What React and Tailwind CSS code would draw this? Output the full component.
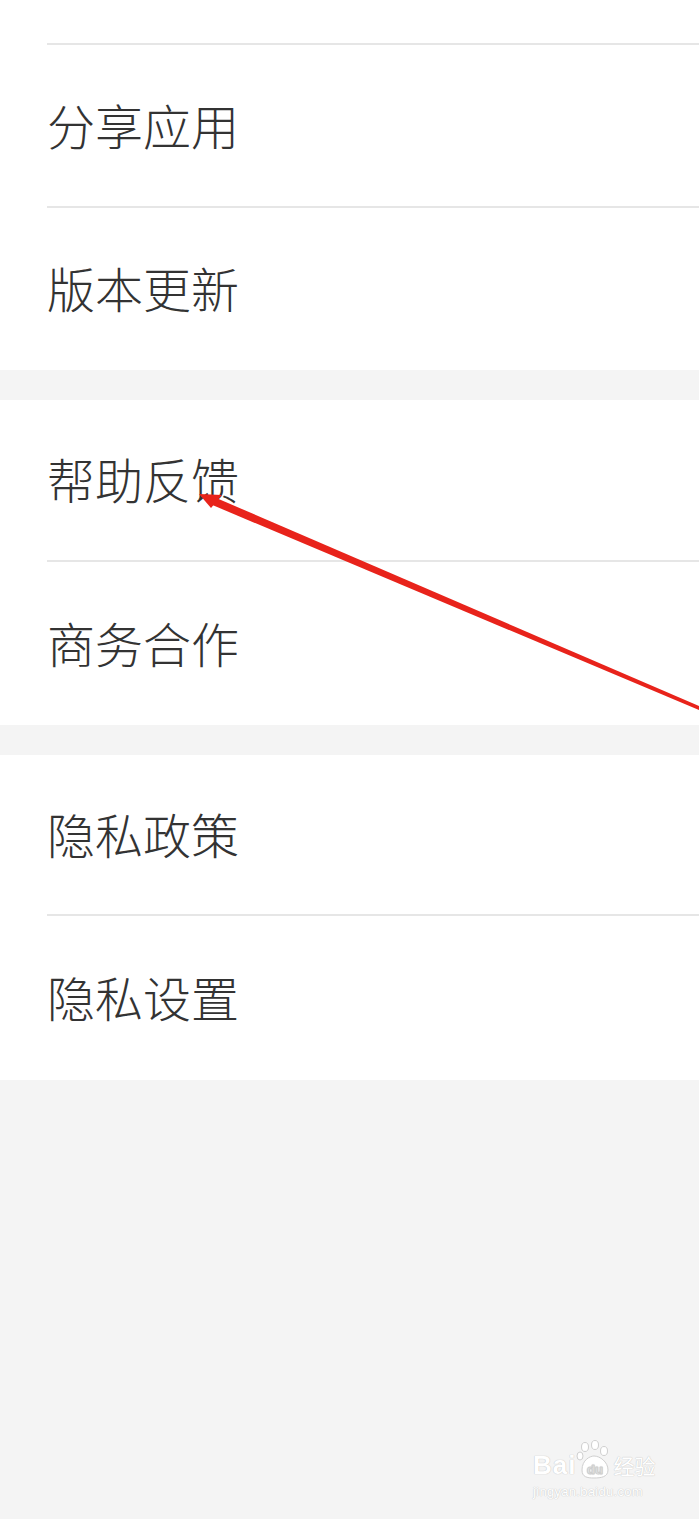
const Row = ({ label, h }) => (
    <div className={`flex items-center pl-[47px] pb-[4px] ${h}`}>
        <span className="text-[48px] font-light leading-none text-[#333333]">{label}</span>
    </div>
)

const Divider = () => (
    <div className="pl-[47px]">
        <div className="h-[2px] bg-[#e6e6e6]"></div>
    </div>
)

const Watermark = () => (
    <div className="absolute left-[533px] top-[1440px] w-[140px] text-white select-none" style={{ textShadow: '0 0 1px #c8c8c8, 0 0 1px #c8c8c8' }}>
        <div className="flex items-end">
            <span className="text-[26px] font-bold leading-none tracking-[1px]" style={{ fontFamily: '"Liberation Sans", Arial, sans-serif' }}>Bai</span>
            <svg width="36" height="40" viewBox="0 0 36 40" className="-mb-[2px]">
                <g fill="#ffffff" stroke="#cfcfcf" strokeWidth="1">
                    <ellipse cx="9" cy="7" rx="3.5" ry="4.5" />
                    <ellipse cx="19" cy="5" rx="3.5" ry="4.5" />
                    <ellipse cx="28" cy="11" rx="3.5" ry="4.5" />
                    <ellipse cx="4" cy="16" rx="3" ry="4" />
                    <path d="M6 30 C6 20 14 16 18 16 C24 16 32 22 32 30 C32 37 25 38 18 38 C11 38 6 37 6 30 Z" />
                </g>
                <text x="19" y="34" textAnchor="middle" fontSize="13" fontWeight="bold" fill="#ffffff" stroke="#cfcfcf" strokeWidth="0.6" fontFamily="Liberation Sans, Arial, sans-serif">du</text>
            </svg>
            <span className="text-[21px] leading-none ml-[1px] mb-[2px]" style={{ fontFamily: '"Noto Sans CJK SC", sans-serif' }}>经验</span>
        </div>
        <div className="text-[13px] leading-none mt-[7px] tracking-[0.3px]" style={{ fontFamily: '"Liberation Sans", Arial, sans-serif' }}>jingyan.baidu.com</div>
    </div>
)

const App = () => {
    return (
        <div className="relative w-[699px] h-[1519px] bg-[#f4f4f4] overflow-hidden" style={{ fontFamily: '"Noto Sans CJK SC", "Noto Sans", sans-serif' }}>
            <div className="bg-white">
                <div className="h-[43px]"></div>
                <Divider />
                <Row label="分享应用" h="h-[161px]" />
                <Divider />
                <Row label="版本更新" h="h-[162px]" />
            </div>
            <div className="h-[30px]"></div>
            <div className="bg-white">
                <Row label="帮助反馈" h="h-[160px]" />
                <Divider />
                <Row label="商务合作" h="h-[163px]" />
            </div>
            <div className="h-[30px]"></div>
            <div className="bg-white">
                <Row label="隐私政策" h="h-[159px]" />
                <Divider />
                <Row label="隐私设置" h="h-[164px]" />
            </div>

            {/* red annotation arrow */}
            <svg className="absolute left-0 top-0" width="699" height="1519" viewBox="0 0 699 1519">
                <polygon points="214,497 699,706 699,710 210,504" fill="#e8231b" />
                <polygon points="199,494 222,495 211,508" fill="#e8231b" />
            </svg>

            <Watermark />
        </div>
    )
}

export default App;
